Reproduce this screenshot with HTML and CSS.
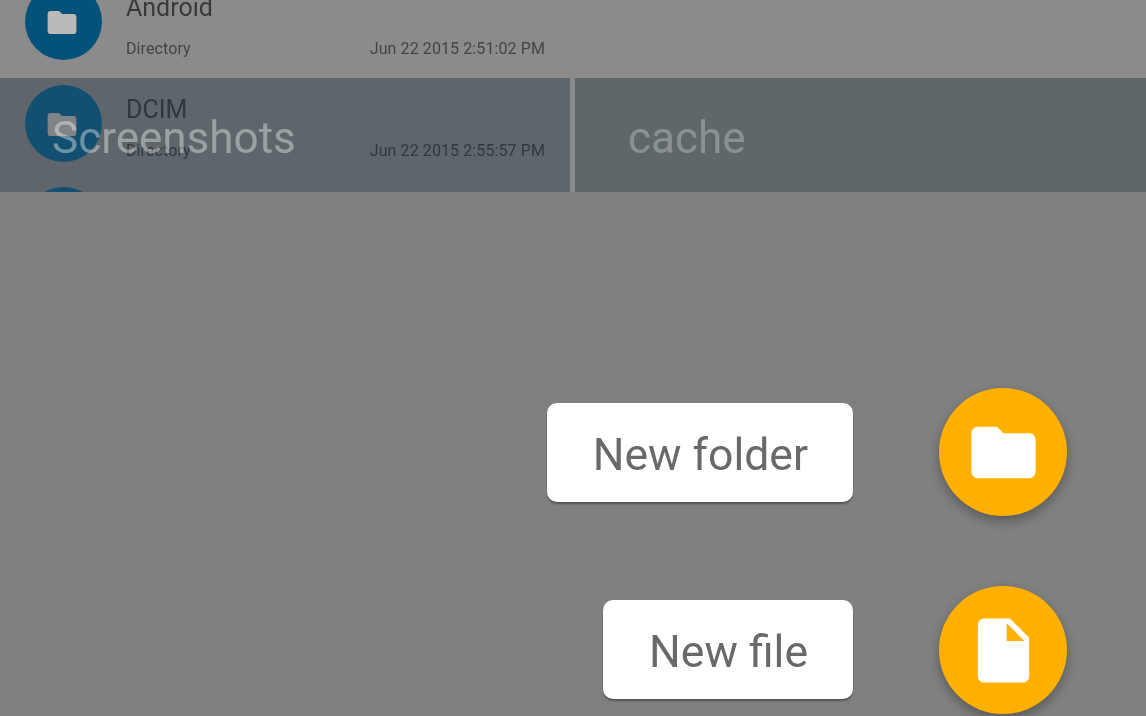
FILE: index.html
```html
<!DOCTYPE html>
<html lang="en">
<head>
<meta charset="utf-8">
<title>File manager</title>
<link rel="stylesheet" href="styles.css">
</head>
<body>
<div class="screen">
  <div class="panes">
    <section class="pane pane-left">
      <div class="list">
        <div class="row">
          <div class="avatar"><svg class="mini" viewBox="2 4 20 16"><path d="M10 4H4c-1.1 0-2 .9-2 2v12c0 1.1.9 2 2 2h16c1.1 0 2-.9 2-2V8c0-1.1-.9-2-2-2h-8l-2-2z"/></svg></div>
          <div class="info">
            <div class="name">Android</div>
            <div class="meta"><span>Directory</span><span>Jun 22 2015 2:51:02 PM</span></div>
          </div>
        </div>
        <div class="row selected">
          <div class="avatar"><svg class="mini" viewBox="2 4 20 16"><path d="M10 4H4c-1.1 0-2 .9-2 2v12c0 1.1.9 2 2 2h16c1.1 0 2-.9 2-2V8c0-1.1-.9-2-2-2h-8l-2-2z"/></svg></div>
          <div class="info">
            <div class="name">DCIM</div>
            <div class="meta"><span>Directory</span><span>Jun 22 2015 2:55:57 PM</span></div>
          </div>
        </div>
        <div class="row selected">
          <div class="avatar"></div>
        </div>
      </div>
      <div class="pane-title">Screenshots</div>
    </section>
    <section class="pane pane-right">
      <div class="blank"></div>
      <div class="band"><span class="band-title">cache</span></div>
    </section>
  </div>
  <div class="actions">
    <div class="action">
      <div class="label">New folder</div>
      <div class="fab"><svg class="fab-icon" viewBox="0 0 24 24"><path d="M10 4H4c-1.1 0-2 .9-2 2v12c0 1.1.9 2 2 2h16c1.1 0 2-.9 2-2V8c0-1.1-.9-2-2-2h-8l-2-2z"/></svg></div>
    </div>
    <div class="action">
      <div class="label label-file">New file</div>
      <div class="fab"><svg class="fab-icon" viewBox="0 0 24 24"><path d="M6 2c-1.1 0-1.99.9-1.99 2L4 20c0 1.1.89 2 1.99 2H18c1.1 0 2-.9 2-2V8l-6-6H6zm7 7V3.5L18.5 9H13z"/></svg></div>
    </div>
  </div>
</div>
</body>
</html>
```

FILE: styles.css
```css
html, body {
  margin: 0;
  height: 100%;
  overflow: hidden;
  background: #808080;
}

.screen {
  height: 716px;
  overflow: hidden;
  font-family: Roboto, "Liberation Sans", sans-serif;
  background: #808080;
  filter: blur(0.5px);
}

.panes {
  display: grid;
  grid-template-columns: 570px 1fr;
  column-gap: 5px;
  height: 192px;
  background: #8b8b8b;
}

.pane {
  position: relative;
  overflow: hidden;
  height: 192px;
}

.list {
  margin-top: -24px;
}

.row {
  display: flex;
  gap: 24px;
  height: 102px;
  padding: 7px 25px 0;
  box-sizing: border-box;
  background: #8c8b8c;
}

.row.selected {
  background: #5e666b;
}

.avatar {
  flex: none;
  display: flex;
  align-items: center;
  justify-content: center;
  width: 77px;
  height: 77px;
  border-radius: 50%;
  background: #04527a;
}

.selected .avatar {
  background: #124f70;
}

.mini {
  width: 30px;
  height: 23px;
  margin: 1px 4px 0 0;
  fill: #bcbab8;
}

.selected .mini {
  fill: #7f8488;
}

.info {
  flex: 1;
  min-width: 0;
  padding-top: 8px;
  filter: blur(0.6px);
}

.name {
  font-size: 25px;
  line-height: 34px;
  color: #3a3a3a;
}

.selected .name {
  color: #30363a;
}

.meta {
  display: flex;
  justify-content: space-between;
  margin-top: 14px;
  font-size: 16px;
  line-height: 20px;
  letter-spacing: 0.1px;
  color: #444;
}

.selected .meta {
  color: #32383c;
}

.pane-title {
  position: absolute;
  left: 52px;
  top: 112px;
  font-size: 44px;
  line-height: 52px;
  color: rgba(255, 255, 255, 0.38);
}

.blank {
  height: 78px;
  background: #8b8b8b;
}

.band {
  height: 114px;
  box-sizing: border-box;
  padding: 34px 0 0 53px;
  background: #5f676a;
}

.band-title {
  font-size: 44px;
  line-height: 52px;
  color: rgba(255, 255, 255, 0.28);
}

.actions {
  display: flex;
  flex-direction: column;
  align-items: flex-end;
  gap: 70px;
  padding: 196px 79px 0 0;
}

.action {
  display: flex;
  align-items: center;
  gap: 86px;
  height: 128px;
}

.label {
  height: 99px;
  padding: 0 45px 0 46px;
  border-radius: 10px;
  font-size: 44.5px;
  line-height: 104px;
  color: #696969;
  background: #fff;
  box-shadow: 0 2px 2px rgba(0, 0, 0, 0.35);
}

.label-file {
  margin-top: -2px;
}

.fab {
  display: flex;
  align-items: center;
  justify-content: center;
  width: 128px;
  height: 128px;
  border-radius: 50%;
  background: #ffb000;
  box-shadow: 0 5px 12px rgba(0, 0, 0, 0.3);
}

.fab-icon {
  width: 77px;
  height: 77px;
  fill: #fff;
}
```
